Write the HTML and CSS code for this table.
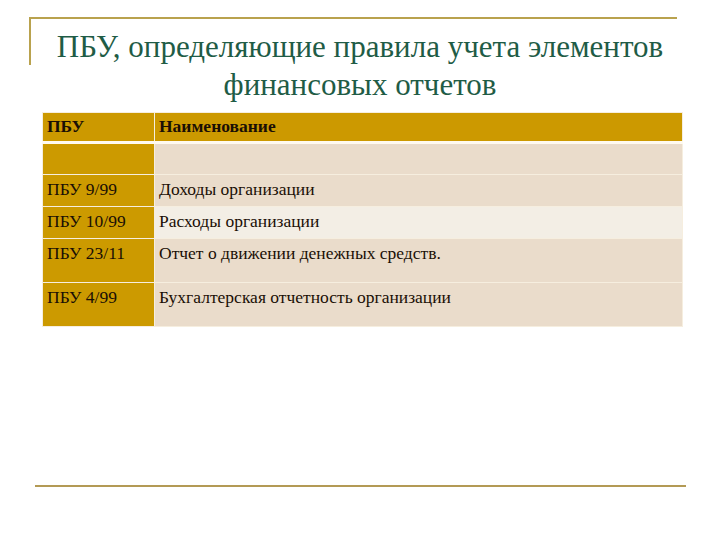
FILE: index.html
```html
<!DOCTYPE html>
<html lang="ru">
<head>
<meta charset="utf-8">
<link rel="stylesheet" href="styles.css">
</head>
<body>
<div class="slide">
  <div class="frame"></div>
  <h1 class="title">ПБУ, определяющие правила учета элементов<br>финансовых отчетов</h1>
  <table class="grid">
    <tr class="head"><td class="c1">ПБУ</td><td class="c2">Наименование</td></tr>
    <tr class="r-empty"><td class="c1"></td><td class="c2"></td></tr>
    <tr class="r-a"><td class="c1">ПБУ 9/99</td><td class="c2">Доходы организации</td></tr>
    <tr class="r-b"><td class="c1">ПБУ 10/99</td><td class="c2">Расходы организации</td></tr>
    <tr class="r-tall"><td class="c1">ПБУ 23/11</td><td class="c2">Отчет о движении денежных средств.</td></tr>
    <tr class="r-tall"><td class="c1">ПБУ 4/99</td><td class="c2">Бухгалтерская отчетность организации</td></tr>
  </table>
  <div class="footer-rule"></div>
</div>
</body>
</html>
```
FILE: styles.css
```css
html, body {
  margin: 0;
  padding: 0;
  background: #ffffff;
}
.slide {
  width: 720px;
  height: 540px;
  padding-top: 17px;
  box-sizing: border-box;
  font-family: "Liberation Serif", "DejaVu Serif", serif;
}
.frame {
  margin-left: 29px;
  width: 648px;
  height: 48px;
  border-top: 2px solid #b9a24e;
  border-left: 2px solid #b9a24e;
  box-sizing: border-box;
}
.title {
  margin: -37px 0 0 0;
  font-weight: normal;
  font-size: 31px;
  line-height: 38px;
  color: #1f5c46;
  text-align: center;
}
.grid {
  margin: 8px 0 0 42px;
  width: 641px;
  border-collapse: collapse;
  font-size: 17.5px;
  color: #1a0f05;
}
.grid td {
  padding: 0 0 0 4px;
  vertical-align: top;
  border: 1px solid #f6eedf;
  line-height: 20px;
  box-sizing: border-box;
}
.c1 {
  width: 112px;
  background: #cc9a00;
}
.head td {
  height: 30px;
  padding-top: 3px;
  font-weight: bold;
  background: #cc9900;
  border-bottom: 3px solid #fffaf0;
}
.r-empty td { height: 32px; }
.r-empty .c2 { background: #eadccb; }
.r-a td { height: 32px; padding-top: 4px; }
.r-a .c2 { background: #eadccb; }
.r-b td { height: 32px; padding-top: 4px; }
.r-b .c2 { background: #f3eee5; }
.r-tall td { height: 44px; padding-top: 4px; }
.r-tall .c2 { background: #eadccb; }
.footer-rule {
  margin: 158px 0 0 35px;
  width: 651px;
  height: 2px;
  background: #b39a55;
}
```
